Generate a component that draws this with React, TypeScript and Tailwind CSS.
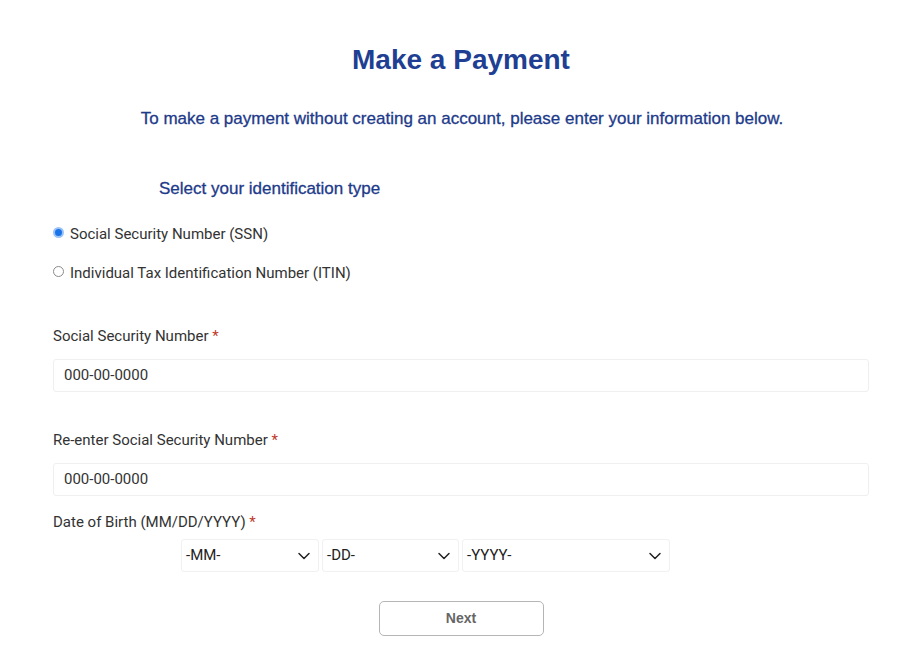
import { ChevronDown } from "lucide-react";

const body = { fontFamily: "Roboto, 'Liberation Sans', sans-serif" };
const head = { fontFamily: "'Liberation Sans', Arial, sans-serif" };

function Radio({ checked, label }: { checked: boolean; label: string }) {
  return (
    <label className="flex items-center h-5 text-[15px] text-[#333]">
      {checked ? (
        <span className="w-[11px] h-[11px] rounded-full bg-[#1a73e8] border-[2.5px] border-[#9cc3f5] box-border mr-[6px] -mt-1" />
      ) : (
        <span className="w-[11px] h-[11px] rounded-full border border-[#8a8a8a] box-border mr-[6px] -mt-1" />
      )}
      {label}
    </label>
  );
}

function Field({ label, placeholder }: { label: string; placeholder: string }) {
  return (
    <div>
      <div className="text-[15px] text-[#333] leading-5">
        {label} <span className="text-[#c0392b]">*</span>
      </div>
      <div className="mt-[13px] h-[33px] border border-[#efefef] rounded-[3px] flex items-center px-[10px] text-[15px] text-[#333]">
        {placeholder}
      </div>
    </div>
  );
}

function Select({ text, width }: { text: string; width: string }) {
  return (
    <div className={`${width} h-[33px] border border-[#f1f1f1] rounded-[3px] flex items-center justify-between pl-[4px] pr-[4px] text-[15px] text-[#222]`}>
      <span>{text}</span>
      <ChevronDown size={20} strokeWidth={1.8} className="text-[#222]" />
    </div>
  );
}

export default function App() {
  return (
    <div className="bg-white min-h-[665px] pl-[53px] pr-[55px]" style={body}>
      <h1 className="pt-[43px] text-center text-[28px] font-bold text-[#213f92] leading-[34px]" style={head}>
        Make a Payment
      </h1>
      <p className="mt-[30px] ml-[-53px] mr-[-55px] text-center text-[17px] text-[#1d3a8a] leading-6 [-webkit-text-stroke:0.3px_#1d3a8a]" style={head}>
        To make a payment without creating an account, please enter your information below.
      </p>
      <h2 className="mt-[46px] ml-[106px] text-[17px] text-[#1d3a8a] leading-6 [-webkit-text-stroke:0.3px_#1d3a8a]" style={head}>
        Select your identification type
      </h2>
      <div className="mt-[23px] flex flex-col gap-[19px]">
        <Radio checked label="Social Security Number (SSN)" />
        <Radio checked={false} label="Individual Tax Identification Number (ITIN)" />
      </div>
      <div className="mt-[43px]">
        <Field label="Social Security Number" placeholder="000-00-0000" />
      </div>
      <div className="mt-[38px]">
        <Field label="Re-enter Social Security Number" placeholder="000-00-0000" />
      </div>
      <div className="mt-[16px] text-[15px] text-[#333] leading-5">
        Date of Birth (MM/DD/YYYY) <span className="text-[#c0392b]">*</span>
      </div>
      <div className="mt-[7px] ml-[128px] flex gap-[3px]">
        <Select text="-MM-" width="w-[138px]" />
        <Select text="-DD-" width="w-[137px]" />
        <Select text="-YYYY-" width="w-[208px]" />
      </div>
      <div className="mt-[29px] flex justify-center">
        <button
          className="w-[165px] h-[35px] border border-[#b5b5b5] rounded-[5px] text-[14px] font-bold text-[#666] bg-white"
          style={head}
        >
          Next
        </button>
      </div>
    </div>
  );
}
